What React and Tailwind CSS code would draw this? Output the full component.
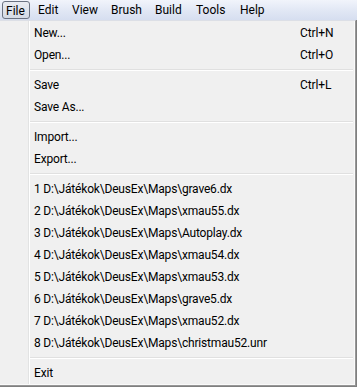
import React from 'react';

const FONT = { fontFamily: 'Roboto, "Noto Sans", sans-serif' };

const BAR_ITEMS = [
    { label: 'Edit', w: 'w-[34px]' },
    { label: 'View', w: 'w-[39px]' },
    { label: 'Brush', w: 'w-[44px]' },
    { label: 'Build', w: 'w-[41px]' },
    { label: 'Tools', w: 'w-[44px]' },
    { label: 'Help', w: 'w-[40px]' },
];

// menu entries, 'sep' is a separator line
const MENU = [
    { label: 'New...', key: 'Ctrl+N' },
    { label: 'Open...', key: 'Ctrl+O' },
    'sep',
    { label: 'Save', key: 'Ctrl+L' },
    { label: 'Save As...' },
    'sep',
    { label: 'Import...' },
    { label: 'Export...' },
    'sep',
    { label: '1 D:\\Játékok\\DeusEx\\Maps\\grave6.dx' },
    { label: '2 D:\\Játékok\\DeusEx\\Maps\\xmau55.dx' },
    { label: '3 D:\\Játékok\\DeusEx\\Maps\\Autoplay.dx' },
    { label: '4 D:\\Játékok\\DeusEx\\Maps\\xmau54.dx' },
    { label: '5 D:\\Játékok\\DeusEx\\Maps\\xmau53.dx' },
    { label: '6 D:\\Játékok\\DeusEx\\Maps\\grave5.dx' },
    { label: '7 D:\\Játékok\\DeusEx\\Maps\\xmau52.dx' },
    { label: '8 D:\\Játékok\\DeusEx\\Maps\\christmau52.unr' },
    'sep',
    { label: 'Exit' },
];

const MenuItem = ({ label, shortcut }) => (
    <div className="flex h-[22px] leading-[22px] text-[12px] text-black whitespace-nowrap">
        <div className="w-[270px] pl-[4px] tracking-[-0.18px]">{label}</div>
        {shortcut && <div className="tracking-[-0.1px]">{shortcut}</div>}
    </div>
);

const Separator = () => (
    <div className="h-[8px] pt-[3px] pr-[1px]">
        <div className="h-px bg-[#e0e0e0]" />
        <div className="h-px bg-white" />
    </div>
);

export default function App() {
    return (
        <div className="w-[357px] h-[387px] flex flex-col bg-[#7f7f7f] overflow-hidden" style={FONT}>
            {/* menu bar */}
            <div className="h-[20px] flex items-stretch bg-gradient-to-b from-[#f1f4fb] via-[#e2e8f5] to-[#d6def0] text-[12px] text-black leading-[18px]">
                <div className="ml-[2px] mt-[1px] mb-[1px] w-[28px] pl-[3px] border border-[#6a7282] rounded-[3px] bg-gradient-to-b from-[#e9ecf2] to-[#d4dae5]">
                    File
                </div>
                {BAR_ITEMS.map(item => (
                    <div key={item.label} className={`${item.w} pl-[8px] pt-[1px]`}>
                        {item.label}
                    </div>
                ))}
            </div>

            {/* file menu popup */}
            <div className="w-[356px] h-[366px] flex border-t border-[#dcdfe6] border-r border-b border-r-[#979797] border-b-[#979797]">
                <div className="flex-1 flex bg-[#f0f0f0] border-r border-b border-[#fafafa]">
                    <div className="w-[29px] border-r border-[#e2e3e3]" />
                    <div className="w-px bg-white" />
                    <div className="flex-1 pt-[1px]">
                        {MENU.map((item, i) =>
                            item === 'sep'
                                ? <Separator key={i} />
                                : <MenuItem key={i} label={item.label} shortcut={item.key} />
                        )}
                    </div>
                </div>
            </div>
        </div>
    );
}
